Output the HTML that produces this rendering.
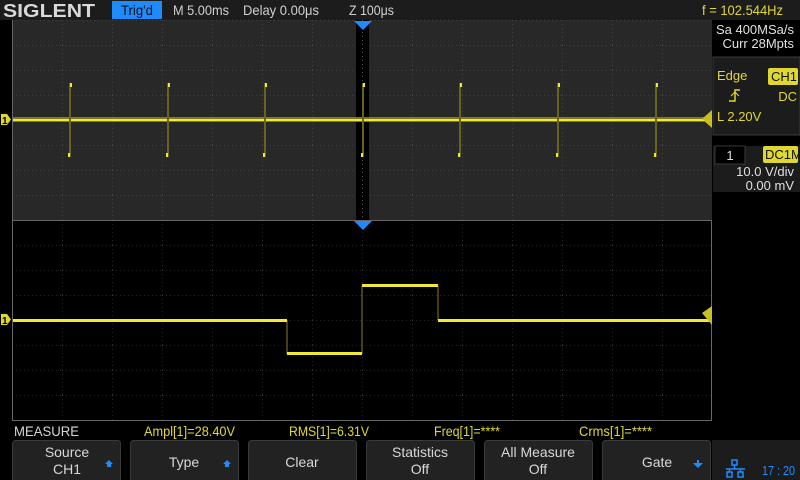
<!DOCTYPE html>
<html><head><meta charset="utf-8"><style>
html,body{margin:0;padding:0;background:#000;}
body{width:800px;height:480px;overflow:hidden;position:relative;font-family:"Liberation Sans",sans-serif;}
svg{position:absolute;left:0;top:0;}
text{font-family:"Liberation Sans",sans-serif;}
</style></head><body>
<svg width="800" height="480" viewBox="0 0 800 480" xmlns="http://www.w3.org/2000/svg">
<defs>
<pattern id="gu" x="12" y="20" width="50" height="25" patternUnits="userSpaceOnUse">
<path d="M0 0V25M0 0H50" stroke="#5a5a5a" stroke-width="1" stroke-dasharray="1 3" fill="none"/>
</pattern>
<pattern id="gl" x="12" y="220" width="50" height="25" patternUnits="userSpaceOnUse">
<path d="M0 0V25M0 0H50" stroke="#4a4a4a" stroke-width="1" stroke-dasharray="1 3" fill="none"/>
</pattern>
</defs>
<rect x="0" y="0" width="800" height="20" fill="#1c1c1c"/>
<text x="3" y="17" font-size="18" font-weight="bold" fill="#d8d8d8" textLength="92" lengthAdjust="spacingAndGlyphs">SIGLENT</text>
<rect x="112" y="1" width="50" height="18" fill="#1e8cff"/>
<text x="121" y="15" font-size="14" fill="#111" textLength="32" lengthAdjust="spacingAndGlyphs">Trig'd</text>
<text x="173" y="15" font-size="14" fill="#d0d0d0" textLength="56" lengthAdjust="spacingAndGlyphs">M 5.00ms</text>
<text x="243" y="15" font-size="14" fill="#d0d0d0" textLength="76" lengthAdjust="spacingAndGlyphs">Delay 0.00μs</text>
<text x="349" y="15" font-size="14" fill="#d0d0d0" textLength="45" lengthAdjust="spacingAndGlyphs">Z 100μs</text>
<text x="702" y="15" font-size="14" fill="#e0d830" textLength="81" lengthAdjust="spacingAndGlyphs">f = 102.544Hz</text>
<rect x="12" y="20" width="700" height="200" fill="#282828"/>
<rect x="12" y="20" width="700" height="200" fill="url(#gu)"/>
<rect x="356" y="20" width="13" height="200" fill="#000"/>
<line x1="362.5" y1="20" x2="362.5" y2="220" stroke="#555" stroke-dasharray="1 3"/>
<path d="M354 21H372L363 30Z" fill="#1e8cff"/>
<rect x="12" y="117" width="700" height="5" fill="#8a8420" opacity="0.9"/>
<rect x="12" y="119" width="700" height="2" fill="#f0ea30"/>
<g stroke="#6a6418" stroke-width="2">
<line x1="70" y1="83" x2="70" y2="157"/><line x1="168" y1="83" x2="168" y2="157"/>
<line x1="265" y1="83" x2="265" y2="157"/><line x1="363" y1="83" x2="363" y2="157"/>
<line x1="460" y1="83" x2="460" y2="157"/><line x1="558" y1="83" x2="558" y2="157"/>
<line x1="656" y1="83" x2="656" y2="157"/>
</g>
<g fill="#f0ea30">
<rect x="70" y="83" width="2" height="4"/><rect x="68" y="153" width="2" height="4"/>
<rect x="168" y="83" width="2" height="4"/><rect x="166" y="153" width="2" height="4"/>
<rect x="265" y="83" width="2" height="4"/><rect x="263" y="153" width="2" height="4"/>
<rect x="363" y="83" width="2" height="4"/><rect x="361" y="153" width="2" height="4"/>
<rect x="460" y="83" width="2" height="4"/><rect x="458" y="153" width="2" height="4"/>
<rect x="558" y="83" width="2" height="4"/><rect x="556" y="153" width="2" height="4"/>
<rect x="656" y="83" width="2" height="4"/><rect x="654" y="153" width="2" height="4"/>
</g>
<path d="M1 114H7L11 119.5L7 125H1Z" fill="#e0d830"/><text x="2" y="124" font-size="10" font-weight="bold" fill="#000">1</text>
<path d="M702 119L712 110V128Z" fill="#c8c020"/>
<rect x="12" y="220" width="700" height="200" fill="#000"/>
<rect x="12" y="220" width="700" height="200" fill="url(#gl)"/>
<line x1="12" y1="220.5" x2="712" y2="220.5" stroke="#666"/>
<line x1="12.5" y1="20" x2="12.5" y2="420" stroke="#666"/>
<line x1="711.5" y1="220" x2="711.5" y2="420" stroke="#666"/>
<line x1="12" y1="420.5" x2="712" y2="420.5" stroke="#666"/>
<path d="M354 221H372L363 230Z" fill="#1e8cff"/>
<g stroke="#5a5418" stroke-width="1.5">
<line x1="287" y1="320" x2="287" y2="354"/><line x1="362" y1="354" x2="362" y2="286"/><line x1="438" y1="286" x2="438" y2="320"/>
</g>
<g fill="#f0ea30">
<rect x="13" y="319" width="274" height="3"/>
<rect x="287" y="352" width="75" height="3"/>
<rect x="362" y="284" width="76" height="3"/>
<rect x="438" y="319" width="274" height="3"/>
</g>
<path d="M1 314H7L11 319.5L7 325H1Z" fill="#e0d830"/><text x="2" y="324" font-size="10" font-weight="bold" fill="#000">1</text>
<path d="M702 313L712 306V325Z" fill="#c8c020"/>
<rect x="712" y="20" width="88" height="400" fill="#000"/>
<text x="794" y="34" font-size="13" fill="#e0e0e0" text-anchor="end">Sa 400MSa/s</text>
<text x="794" y="48" font-size="13" fill="#e0e0e0" text-anchor="end">Curr 28Mpts</text>
<rect x="713" y="57" width="87" height="78" fill="#1c1c1c" stroke="#3a3a3a"/>
<text x="717" y="80" font-size="13" fill="#e0d830">Edge</text>
<rect x="768" y="68" width="30" height="17" rx="2" fill="#e0d830"/>
<text x="771" y="81" font-size="13" fill="#111">CH1</text>
<path d="M729 101H735V90H740" stroke="#e0d830" stroke-width="1.5" fill="none"/><path d="M731 96L735 92L739 96" stroke="#e0d830" fill="none"/>
<text x="797" y="101" font-size="13" fill="#e0d830" text-anchor="end">DC</text>
<text x="717" y="121" font-size="13" fill="#e0d830">L  2.20V</text>
<rect x="713" y="146" width="87" height="46" fill="#1c1c1c"/>
<rect x="715" y="146" width="30" height="18" fill="#000" stroke="#3a3a3a"/>
<text x="730" y="160" font-size="13" fill="#e0e0e0" text-anchor="middle">1</text>
<rect x="763" y="146" width="35" height="17" rx="2" fill="#e0d830"/>
<text x="765" y="159" font-size="13" fill="#111">DC1M</text>
<text x="794" y="176" font-size="13" fill="#e0e0e0" text-anchor="end">10.0 V/div</text>
<text x="794" y="190" font-size="13" fill="#e0e0e0" text-anchor="end">0.00 mV</text>
<text x="14" y="436" font-size="14" fill="#d8d8d8" textLength="65" lengthAdjust="spacingAndGlyphs">MEASURE</text>
<text x="144" y="436" font-size="14" fill="#e0d830" textLength="91" lengthAdjust="spacingAndGlyphs">Ampl[1]=28.40V</text>
<text x="289" y="436" font-size="14" fill="#e0d830" textLength="80" lengthAdjust="spacingAndGlyphs">RMS[1]=6.31V</text>
<text x="434" y="436" font-size="14" fill="#e0d830" textLength="66" lengthAdjust="spacingAndGlyphs">Freq[1]=****</text>
<text x="579" y="436" font-size="14" fill="#e0d830" textLength="73" lengthAdjust="spacingAndGlyphs">Crms[1]=****</text>
<g fill="#222" stroke="#3a3a3a">
<rect x="12.5" y="440.5" width="108" height="42" rx="3"/>
<rect x="130.5" y="440.5" width="108" height="42" rx="3"/>
<rect x="248.5" y="440.5" width="108" height="42" rx="3"/>
<rect x="366.5" y="440.5" width="108" height="42" rx="3"/>
<rect x="484.5" y="440.5" width="108" height="42" rx="3"/>
<rect x="602.5" y="440.5" width="108" height="42" rx="3"/>
</g>
<g font-size="14" fill="#d8d8d8" text-anchor="middle">
<text x="67" y="457">Source</text><text x="67" y="474">CH1</text>
<text x="184" y="467">Type</text>
<text x="302" y="467">Clear</text>
<text x="420" y="457">Statistics</text><text x="420" y="474">Off</text>
<text x="538" y="457">All Measure</text><text x="538" y="474">Off</text>
<text x="657" y="467">Gate</text>
</g>
<g fill="#1e8cff">
<path d="M105 464L109 460L113 464H111V467H107V464Z"/>
<path d="M223 464L227 460L231 464H229V467H225V464Z"/>
<path d="M694 463H698V460H700V463H704L699 468Z" transform="translate(-1,0)"/>
</g>
<rect x="712" y="440" width="88" height="40" fill="#1c1c1c"/>
<g stroke="#1e8cff" fill="none" stroke-width="1.5">
<rect x="732" y="460" width="5" height="5"/><rect x="727" y="472" width="5" height="5"/><rect x="738" y="472" width="5" height="5"/>
<path d="M734.5 465V469M726 469H745M729.5 469V472M740.5 469V472"/>
</g>
<text x="762" y="475" font-size="13" fill="#1e8cff" textLength="33" lengthAdjust="spacingAndGlyphs">17 : 20</text>
</svg>
</body></html>
